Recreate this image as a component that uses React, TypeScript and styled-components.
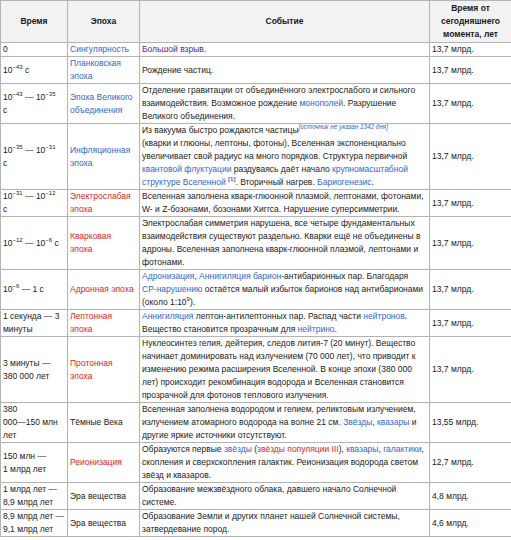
import React from "react";
import styled, { createGlobalStyle } from "styled-components";

const Global = createGlobalStyle`
  html, body { margin: 0; padding: 0; background: #fff; }
  body { font-family: "Liberation Sans", Arial, sans-serif; color: #1a1a1a; }
`;

const Table = styled.table`
  width: 511px;
  table-layout: fixed;
  border-collapse: collapse;
  font-size: 8.5px;
  line-height: 13px;
  border: 1px solid #b4b4b4;
`;

const Th = styled.th`
  background: #f2f2f2;
  border: 1px solid #b4b4b4;
  font-weight: bold;
  text-align: center;
  padding: 1px 2px;
  height: 38px;
  white-space: nowrap;
`;

const Td = styled.td`
  border: 1px solid #b4b4b4;
  padding: 0 2px;
  vertical-align: middle;
  text-align: left;
  white-space: nowrap;
  overflow: hidden;
`;

type LinkKind = "blue" | "red" | "visited";
const A = styled.a<{ $k?: LinkKind }>`
  color: ${(p) => (p.$k === "red" ? "#d42a1e" : p.$k === "visited" ? "#4b2a9a" : "#3366cc")};
  text-decoration: none;
`;

const Sup = styled.sup`
  font-size: 6px;
  line-height: 0;
  vertical-align: 4px;
`;

const Note = styled.sup`
  font-size: 6.3px;
  line-height: 0;
  vertical-align: 4px;
  font-style: italic;
  color: #3366cc;
`;

const Ref = styled.sup`
  font-size: 6px;
  line-height: 0;
  vertical-align: 4px;
  color: #3366cc;
  font-weight: bold;
`;

const P = (n: string) => <Sup>{n}</Sup>;

type Row = {
  time: React.ReactNode;
  epoch: React.ReactNode;
  event: React.ReactNode;
  ago: string;
};

const rows: Row[] = [
  {
    time: "0",
    epoch: <A>Сингулярность</A>,
    event: (
      <>
        <A $k="visited">Большой взрыв</A>.
      </>
    ),
    ago: "13,7 млрд.",
  },
  {
    time: <>10{P("−43")} с</>,
    epoch: (
      <A>
        Планковская
        <br />
        эпоха
      </A>
    ),
    event: "Рождение частиц.",
    ago: "13,7 млрд.",
  },
  {
    time: (
      <>
        10{P("−43")} — 10{P("−35")}
        <br />с
      </>
    ),
    epoch: (
      <A>
        Эпоха Великого
        <br />
        объединения
      </A>
    ),
    event: (
      <>
        Отделение гравитации от объединённого электрослабого и сильного
        <br />
        взаимодействия. Возможное рождение <A>монополей</A>. Разрушение
        <br />
        Великого объединения.
      </>
    ),
    ago: "13,7 млрд.",
  },
  {
    time: (
      <>
        10{P("−35")} — 10{P("−31")}
        <br />с
      </>
    ),
    epoch: (
      <A>
        Инфляционная
        <br />
        эпоха
      </A>
    ),
    event: (
      <>
        Из вакуума быстро рождаются частицы<Note>[источник не указан 1342 дня]</Note>
        <br />
        (кварки и глюоны, лептоны, фотоны), Вселенная экспоненциально
        <br />
        увеличивает свой радиус на много порядков. Структура первичной
        <br />
        <A>квантовой флуктуации</A> раздуваясь даёт начало <A>крупномасштабной</A>
        <br />
        <A>структуре Вселенной</A> <Ref>[1]</Ref>. Вторичный нагрев. <A>Бариогенезис</A>.
      </>
    ),
    ago: "13,7 млрд.",
  },
  {
    time: (
      <>
        10{P("−31")} — 10{P("−12")}
        <br />с
      </>
    ),
    epoch: (
      <A $k="red">
        Электрослабая
        <br />
        эпоха
      </A>
    ),
    event: (
      <>
        Вселенная заполнена кварк-глюонной плазмой, лептонами, фотонами,
        <br />
        W- и Z-бозонами, бозонами Хиггса. Нарушение суперсимметрии.
      </>
    ),
    ago: "13,7 млрд.",
  },
  {
    time: <>10{P("−12")} — 10{P("−6")} с</>,
    epoch: (
      <A $k="red">
        Кварковая
        <br />
        эпоха
      </A>
    ),
    event: (
      <>
        Электрослабая симметрия нарушена, все четыре фундаментальных
        <br />
        взаимодействия существуют раздельно. Кварки ещё не объединены в
        <br />
        адроны. Вселенная заполнена кварк-глюонной плазмой, лептонами и
        <br />
        фотонами.
      </>
    ),
    ago: "13,7 млрд.",
  },
  {
    time: <>10{P("−6")} — 1 с</>,
    epoch: <A $k="red">Адронная эпоха</A>,
    event: (
      <>
        <A>Адронизация</A>, <A>Аннигиляция барион</A>-антибарионных пар. Благодаря
        <br />
        <A>CP-нарушению</A> остаётся малый избыток барионов над антибарионами
        <br />
        (около 1:10{P("9")}).
      </>
    ),
    ago: "13,7 млрд.",
  },
  {
    time: (
      <>
        1 секунда — 3
        <br />
        минуты
      </>
    ),
    epoch: (
      <A $k="red">
        Лептонная
        <br />
        эпоха
      </A>
    ),
    event: (
      <>
        <A>Аннигиляция</A> лептон-антилептонных пар. Распад части <A>нейтронов</A>.
        <br />
        Вещество становится прозрачным для <A>нейтрино</A>.
      </>
    ),
    ago: "13,7 млрд.",
  },
  {
    time: (
      <>
        3 минуты —
        <br />
        380 000 лет
      </>
    ),
    epoch: (
      <A $k="red">
        Протонная
        <br />
        эпоха
      </A>
    ),
    event: (
      <>
        Нуклеосинтез гелия, дейтерия, следов лития-7 (20 минут). Вещество
        <br />
        начинает доминировать над излучением (70 000 лет), что приводит к
        <br />
        изменению режима расширения Вселенной. В конце эпохи (380 000
        <br />
        лет) происходит рекомбинация водорода и Вселенная становится
        <br />
        прозрачной для фотонов теплового излучения.
      </>
    ),
    ago: "13,7 млрд.",
  },
  {
    time: (
      <>
        380
        <br />
        000—150 млн
        <br />
        лет
      </>
    ),
    epoch: "Тёмные Века",
    event: (
      <>
        Вселенная заполнена водородом и гелием, реликтовым излучением,
        <br />
        излучением атомарного водорода на волне 21 см. <A>Звёзды</A>, <A>квазары</A> и
        <br />
        другие яркие источники отсутствуют.
      </>
    ),
    ago: "13,55 млрд.",
  },
  {
    time: (
      <>
        150 млн —
        <br />1 млрд лет
      </>
    ),
    epoch: <A $k="red">Реионизация</A>,
    event: (
      <>
        Образуются первые <A>звёзды</A> (<A $k="red">звёзды популяции III</A>), <A>квазары</A>,{" "}
        <A>галактики</A>,
        <br />
        скопления и сверхскопления галактик. Реионизация водорода светом
        <br />
        звёзд и квазаров.
      </>
    ),
    ago: "12,7 млрд.",
  },
  {
    time: (
      <>
        1 млрд лет —
        <br />
        8,9 млрд лет
      </>
    ),
    epoch: "Эра вещества",
    event: (
      <>
        Образование межзвёздного облака, давшего начало Солнечной
        <br />
        системе.
      </>
    ),
    ago: "4,8 млрд.",
  },
  {
    time: (
      <>
        8,9 млрд лет —
        <br />
        9,1 млрд лет
      </>
    ),
    epoch: "Эра вещества",
    event: (
      <>
        Образование Земли и других планет нашей Солнечной системы,
        <br />
        затвердевание пород.
      </>
    ),
    ago: "4,6 млрд.",
  },
];

export default function App() {
  return (
    <>
      <Global />
      <Table>
        <colgroup>
          <col style={{ width: 67 }} />
          <col style={{ width: 72 }} />
          <col style={{ width: 290 }} />
          <col style={{ width: 82 }} />
        </colgroup>
        <thead>
          <tr>
            <Th>Время</Th>
            <Th>Эпоха</Th>
            <Th>Событие</Th>
            <Th>
              Время от
              <br />
              сегодняшнего
              <br />
              момента, лет
            </Th>
          </tr>
        </thead>
        <tbody>
          {rows.map((r, i) => (
            <tr key={i}>
              <Td>{r.time}</Td>
              <Td>{r.epoch}</Td>
              <Td>{r.event}</Td>
              <Td>{r.ago}</Td>
            </tr>
          ))}
        </tbody>
      </Table>
    </>
  );
}
